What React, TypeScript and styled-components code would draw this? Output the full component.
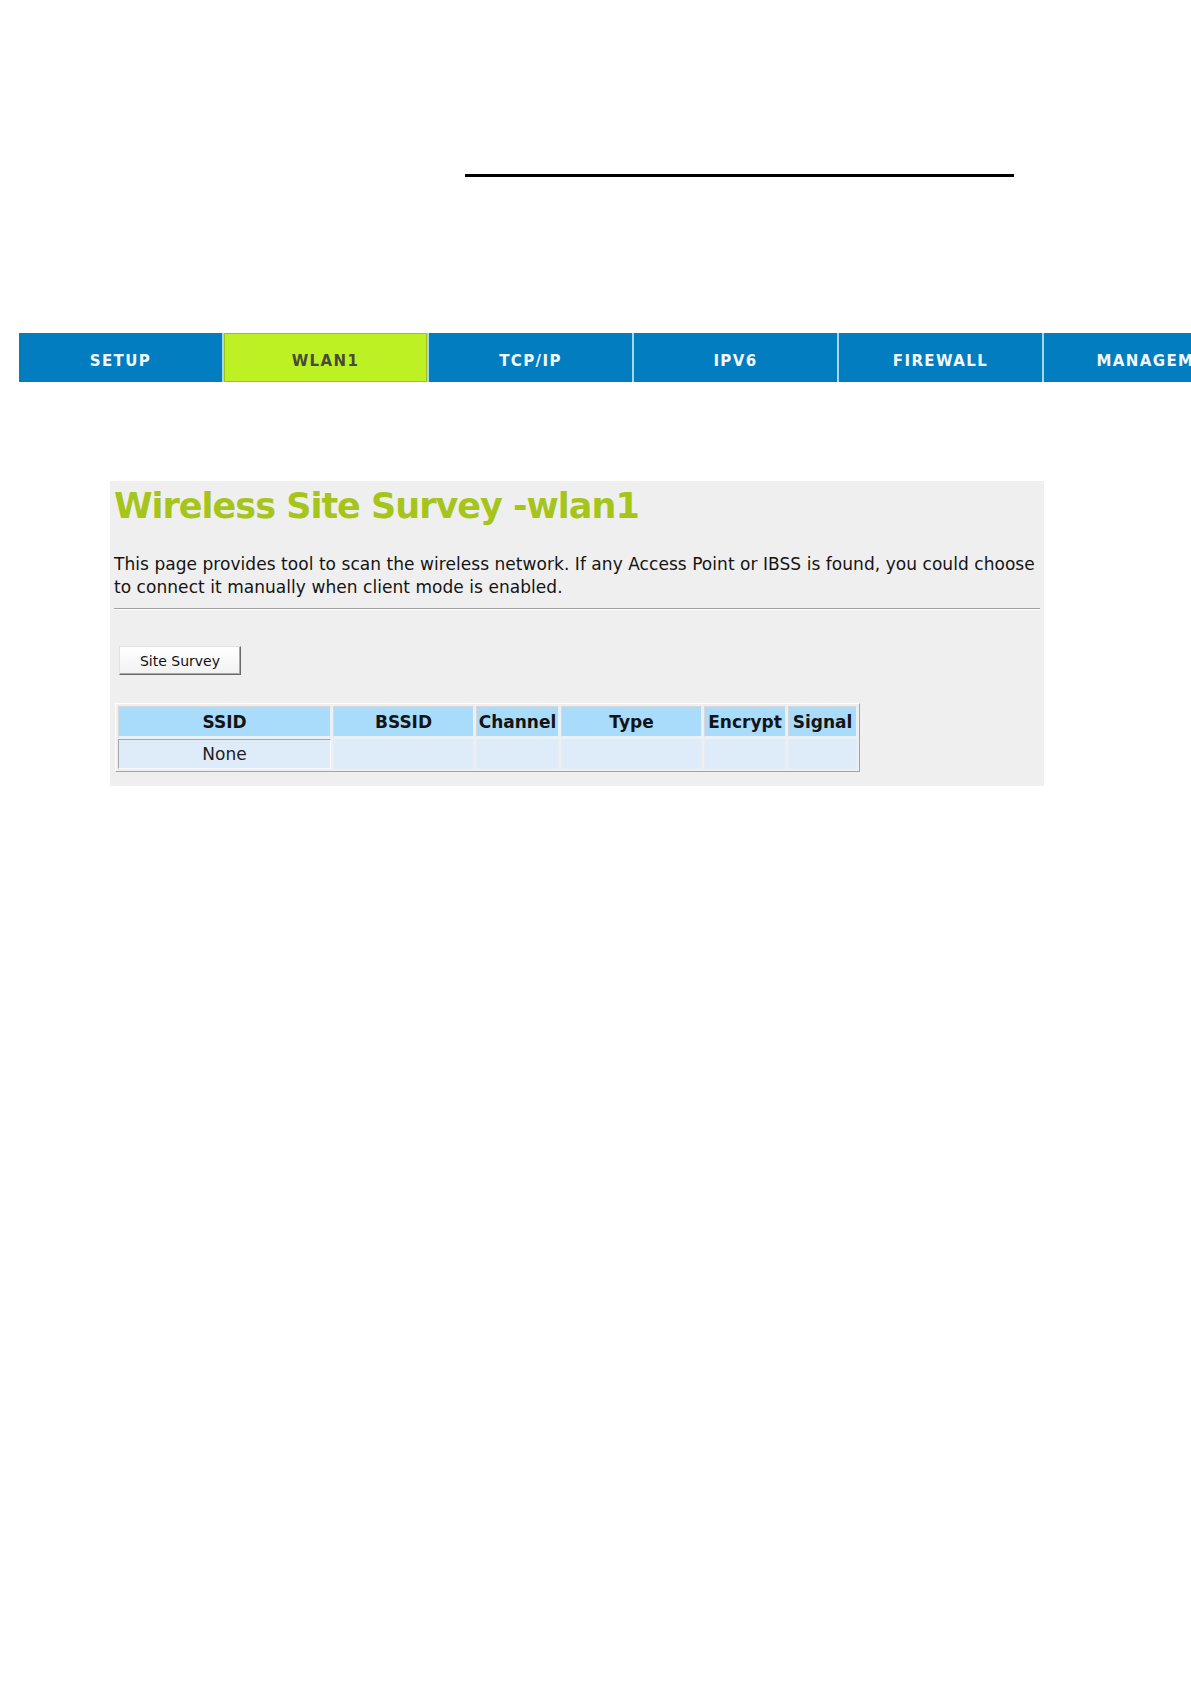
import React from "react";
import styled, { createGlobalStyle } from "styled-components";

const Global = createGlobalStyle`
  html, body {
    margin: 0;
    padding: 0;
    background: #ffffff;
    overflow-x: hidden;
  }
  body {
    font-family: "DejaVu Sans", Verdana, sans-serif;
    color: #111;
  }
`;

const Page = styled.div`
  width: 1191px;
  min-height: 1684px;
  padding-top: 174px;
  box-sizing: border-box;
  overflow: hidden;
`;

const TopRule = styled.div`
  margin-left: 465px;
  width: 549px;
  height: 3px;
  background: #000;
`;

const NavBar = styled.nav`
  margin-top: 156px;
  margin-left: 19px;
  width: 1172px;
  overflow: hidden;
  display: flex;
  gap: 2px;
  background: #a8d6f2;
`;

const Tab = styled.div<{ $active?: boolean; $w: number }>`
  flex: 0 0 ${(p) => p.$w}px;
  height: 49px;
  box-sizing: border-box;
  padding-top: 6px;
  display: flex;
  align-items: center;
  justify-content: center;
  font-family: "DejaVu Sans", Verdana, sans-serif;
  font-weight: bold;
  font-size: 15px;
  letter-spacing: 1.4px;
  white-space: nowrap;
  background: ${(p) => (p.$active ? "#bdf124" : "#017dc0")};
  color: ${(p) => (p.$active ? "#4a4a3a" : "#f4f8fc")};
  border: ${(p) => (p.$active ? "1px solid #98c41c" : "none")};
`;

const Panel = styled.section`
  margin-top: 99px;
  margin-left: 110px;
  width: 934px;
  height: 305px;
  box-sizing: border-box;
  background: #efefef;
  padding: 4px 4px 0 4px;
`;

const Title = styled.h1`
  margin: 0;
  font-family: "DejaVu Sans", Verdana, sans-serif;
  font-weight: bold;
  font-size: 35px;
  letter-spacing: -1px;
  line-height: 42px;
  color: #a6c51a;
`;

const Description = styled.p`
  margin: 26px 0 0 0;
  font-family: "DejaVu Sans", Verdana, sans-serif;
  font-size: 17px;
  letter-spacing: 0.05px;
  line-height: 23px;
  color: #141414;
  white-space: nowrap;
`;

const Divider = styled.hr`
  margin: 9px 0 0 0;
  width: 926px;
  height: 0;
  border: none;
  border-top: 1px solid #a0a0a0;
  border-bottom: 1px solid #ffffff;
`;

const SurveyButton = styled.button`
  margin: 36px 0 0 5px;
  width: 122px;
  height: 29px;
  box-sizing: border-box;
  padding: 0;
  font-family: "DejaVu Sans", Verdana, sans-serif;
  font-size: 14px;
  color: #111;
  background: linear-gradient(#ffffff, #f2f2f2);
  border: 1px solid;
  border-color: #e2e2e2 #6a6a6a #6a6a6a #e2e2e2;
  box-shadow: inset -1px -1px 0 #a8a8a8;
  display: block;
`;

const SurveyTable = styled.table`
  margin: 28px 0 0 1px;
  border-collapse: separate;
  border-spacing: 2px;
  table-layout: fixed;
  border: 1px solid;
  border-color: #ffffff #a4a4a4 #a4a4a4 #ffffff;
`;

const HeadCell = styled.th<{ $w: number }>`
  width: ${(p) => p.$w}px;
  height: 31px;
  box-sizing: border-box;
  padding: 0;
  text-align: center;
  white-space: nowrap;
  font-family: "DejaVu Sans", Verdana, sans-serif;
  font-weight: bold;
  font-size: 17px;
  color: #141414;
  background: #a9dbfb;
  border: 1px solid;
  border-color: #d8d8d8 #e6f2fa #e6f2fa #d8d8d8;
`;

const DataCell = styled.td`
  height: 30px;
  box-sizing: border-box;
  padding: 0;
  text-align: center;
  font-family: "DejaVu Sans", Verdana, sans-serif;
  font-size: 17px;
  color: #202020;
  background: #deecfa;
  border: 1px solid;
  border-color: #e4ecf4 #e4ecf4 #e4ecf4 #e4ecf4;
`;

const FirstDataCell = styled(DataCell)`
  border-color: #a8a8a8 #f4f8fc #f4f8fc #a8a8a8;
`;

const tabs: { label: string; w: number }[] = [
  { label: "SETUP", w: 203 },
  { label: "WLAN1", w: 203 },
  { label: "TCP/IP", w: 203 },
  { label: "IPV6", w: 203 },
  { label: "FIREWALL", w: 203 },
  { label: "MANAGEMENT", w: 240 },
];

const columns: { label: string; w: number }[] = [
  { label: "SSID", w: 213 },
  { label: "BSSID", w: 141 },
  { label: "Channel", w: 83 },
  { label: "Type", w: 141 },
  { label: "Encrypt", w: 82 },
  { label: "Signal", w: 69 },
];

export default function App() {
  return (
    <Page>
      <Global />
      <TopRule />
      <NavBar>
        {tabs.map((t) => (
          <Tab key={t.label} $w={t.w} $active={t.label === "WLAN1"}>
            {t.label}
          </Tab>
        ))}
      </NavBar>
      <Panel>
        <Title>Wireless Site Survey -wlan1</Title>
        <Description>
          This page provides tool to scan the wireless network. If any Access Point or IBSS is found, you could choose
          <br />
          to connect it manually when client mode is enabled.
        </Description>
        <Divider />
        <SurveyButton type="button">Site Survey</SurveyButton>
        <SurveyTable>
          <thead>
            <tr>
              {columns.map((c) => (
                <HeadCell key={c.label} $w={c.w}>
                  {c.label}
                </HeadCell>
              ))}
            </tr>
          </thead>
          <tbody>
            <tr>
              <FirstDataCell>None</FirstDataCell>
              <DataCell />
              <DataCell />
              <DataCell />
              <DataCell />
              <DataCell />
            </tr>
          </tbody>
        </SurveyTable>
      </Panel>
    </Page>
  );
}
